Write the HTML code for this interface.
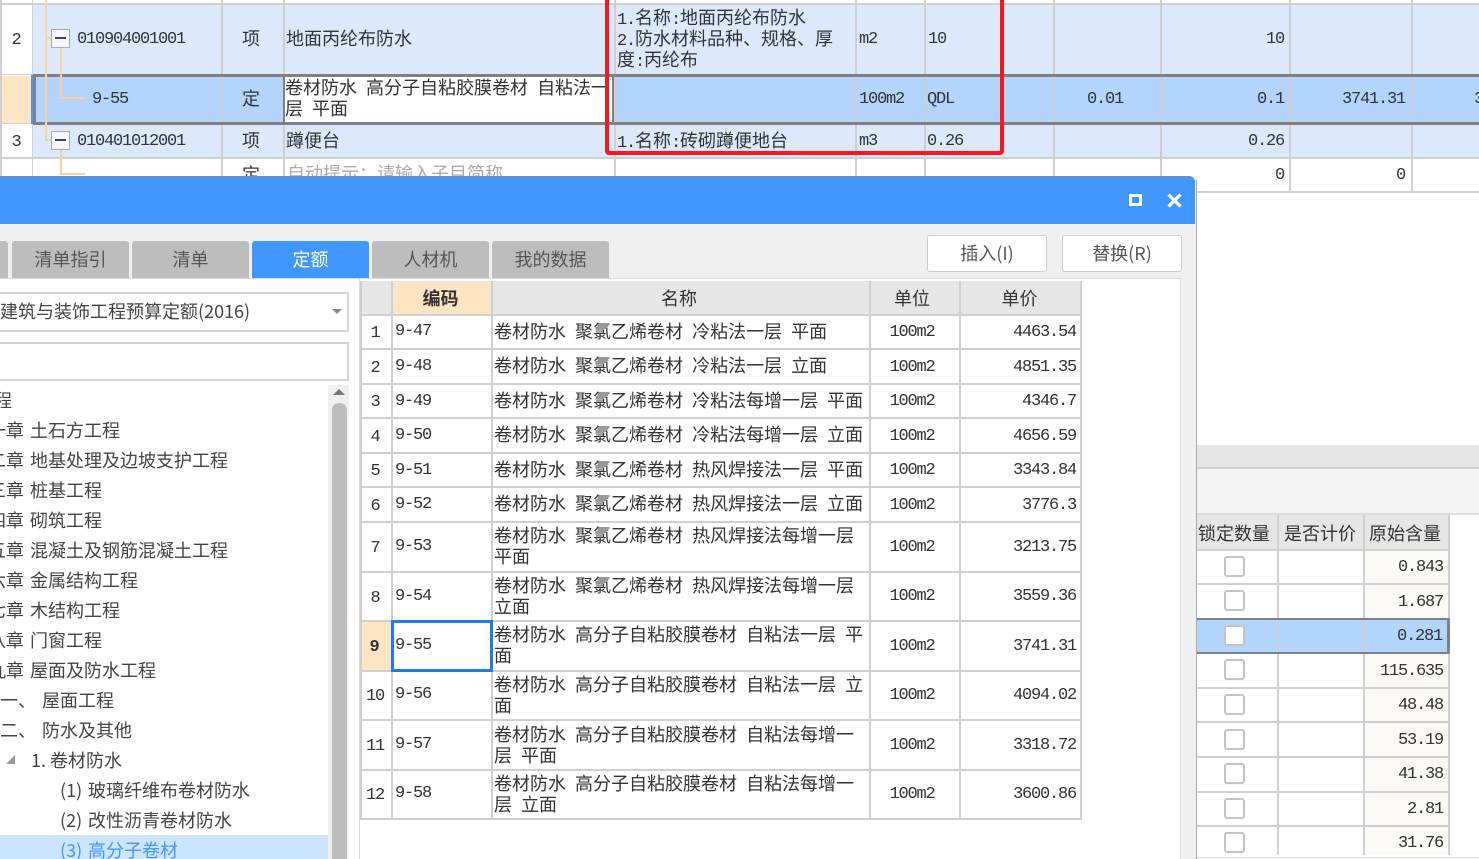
<!DOCTYPE html>
<html><head><meta charset="utf-8"><style>
html,body{margin:0;padding:0;background:#fff}
#r{position:relative;width:1479px;height:859px;overflow:hidden;background:#fff;font-family:"Noto Sans CJK SC","WenQuanYi Zen Hei",sans-serif;font-size:18px;color:#333;word-spacing:5px;filter:blur(.35px)}
#r div{position:absolute}
.t{line-height:22px;height:22px;white-space:pre}
.m{font-family:"Liberation Mono",monospace;font-size:17px;letter-spacing:-1.2px;word-spacing:0}
div.m{margin-top:2px;margin-right:1px}
.c{text-align:center}
.l{background:#cfcfcf}
.o{background:#fdd09a}
.tr{color:#444}
.tab{top:241px;height:37px;width:117px;background:#bdbdbd;border-radius:3px 3px 0 0;text-align:center;line-height:36px;color:#555}
.cb{left:1224px;width:17px;height:17px;border:2px solid #c4c4c4;border-radius:3px;background:#fff}
</style></head><body><div id="r">

<!-- top table backgrounds -->
<div style="left:33px;top:4px;width:1446px;height:70px;background:#dce9fd"></div>
<div style="left:33px;top:75px;width:1446px;height:48px;background:#b3d4fc"></div>
<div style="left:2px;top:76px;width:29px;height:47px;background:#fde4c3"></div>
<div style="left:33px;top:124px;width:1446px;height:34px;background:#dce9fd"></div>
<div style="left:284px;top:76px;width:330px;height:46px;background:#fff"></div>

<!-- horizontal lines -->
<div class="l" style="left:0;top:3px;width:1479px;height:2px"></div>
<div class="l" style="left:0;top:157px;width:1479px;height:2px"></div>
<div class="l" style="left:1196px;top:191px;width:283px;height:2px"></div>
<div class="l" style="left:0;top:74px;width:32px;height:1px"></div>
<div class="l" style="left:0;top:123px;width:32px;height:1px"></div>
<!-- vertical lines -->
<div class="l" style="left:0;top:0;width:2px;height:176px"></div>
<div class="l" style="left:32px;top:0;width:1px;height:176px"></div>
<div class="l" style="left:221px;top:0;width:2px;height:176px"></div>
<div class="l" style="left:283px;top:0;width:2px;height:176px"></div>
<div class="l" style="left:614px;top:0;width:2px;height:176px"></div>
<div class="l" style="left:855px;top:0;width:2px;height:176px"></div>
<div class="l" style="left:924px;top:0;width:2px;height:176px"></div>
<div class="l" style="left:1053px;top:0;width:2px;height:176px"></div>
<div class="l" style="left:1160px;top:0;width:2px;height:176px"></div>
<div class="l" style="left:1289px;top:0;width:2px;height:192px"></div>
<div class="l" style="left:1411px;top:0;width:2px;height:192px"></div>
<!-- selected row outline -->
<div style="left:33px;top:74px;width:1446px;height:3px;background:#808080"></div>
<div style="left:33px;top:122px;width:1446px;height:3px;background:#808080"></div>
<div style="left:31px;top:75px;width:2px;height:49px;background:#3f97ff"></div>
<div style="left:33px;top:75px;width:3px;height:49px;background:#808080"></div>
<div style="left:283px;top:75px;width:2px;height:49px;background:#808080"></div>
<div style="left:612px;top:75px;width:2px;height:49px;background:#808080"></div>

<!-- tree lines -->
<div class="o" style="left:45px;top:0;width:2px;height:141px"></div>
<div class="o" style="left:45px;top:37px;width:7px;height:2px"></div>
<div class="o" style="left:45px;top:139px;width:7px;height:2px"></div>
<div class="o" style="left:60px;top:47px;width:2px;height:52px"></div>
<div class="o" style="left:60px;top:97px;width:25px;height:2px"></div>
<div class="o" style="left:60px;top:149px;width:2px;height:26px"></div>
<div class="o" style="left:60px;top:173px;width:25px;height:2px"></div>
<div style="left:51px;top:29px;width:17px;height:17px;border:1px solid #aaa;background:#f4f7fe"></div>
<div style="left:55px;top:37px;width:11px;height:2px;background:#444"></div>
<div style="left:51px;top:131px;width:17px;height:17px;border:1px solid #aaa;background:#f4f7fe"></div>
<div style="left:55px;top:139px;width:11px;height:2px;background:#444"></div>

<!-- top table text -->
<div class="t m c" style="left:2px;width:28px;top:28px">2</div>
<div class="t m c" style="left:2px;width:28px;top:130px">3</div>
<div class="t m" style="left:77px;top:27px">010904001001</div>
<div class="t m" style="left:77px;top:129px">010401012001</div>
<div class="t m" style="left:92px;top:87px">9-55</div>
<div class="t" style="left:242px;top:27px">项</div>
<div class="t" style="left:242px;top:87px">定</div>
<div class="t" style="left:242px;top:129px">项</div>
<div class="t" style="left:286px;top:27px">地面丙纶布防水</div>
<div class="t" style="left:285px;top:76px">卷材防水 高分子自粘胶膜卷材 自粘法一</div>
<div class="t" style="left:285px;top:97px">层 平面</div>
<div class="t" style="left:286px;top:129px">蹲便台</div>
<div class="t" style="left:242px;top:163px">定</div>
<div class="t" style="left:287px;top:162px;color:#aaa">自动提示：请输入子目简称</div>
<div class="t" style="left:617px;top:6px"><span class="m">1.</span>名称<span class="m">:</span>地面丙纶布防水</div>
<div class="t" style="left:617px;top:27px"><span class="m">2.</span>防水材料品种、规格、厚</div>
<div class="t" style="left:617px;top:48px">度<span class="m">:</span>丙纶布</div>
<div class="t" style="left:617px;top:129px"><span class="m">1.</span>名称<span class="m">:</span>砖砌蹲便地台</div>
<div class="t m" style="left:859px;top:27px">m2</div>
<div class="t m" style="left:928px;top:27px">10</div>
<div class="t m" style="left:859px;top:87px">100m2</div>
<div class="t m" style="left:927px;top:87px">QDL</div>
<div class="t m" style="left:859px;top:129px">m3</div>
<div class="t m" style="left:927px;top:129px">0.26</div>
<div class="t m" style="right:194px;top:27px">10</div>
<div class="t m" style="right:355px;top:87px">0.01</div>
<div class="t m" style="right:194px;top:87px">0.1</div>
<div class="t m" style="right:73px;top:87px">3741.31</div>
<div class="t m" style="left:1474px;top:87px">3</div>
<div class="t m" style="right:194px;top:129px">0.26</div>
<div class="t m" style="right:194px;top:163px">0</div>
<div class="t m" style="right:73px;top:163px">0</div>

<!-- red box -->
<div style="left:605px;top:-6px;width:391px;height:153px;border:4px solid #f5191c;border-radius:4px"></div>

<!-- right panel -->
<div style="left:1197px;top:445px;width:282px;height:22px;background:#e6e6e6"></div>
<div style="left:1197px;top:467px;width:282px;height:2px;background:#cfcfcf"></div>
<div style="left:1197px;top:469px;width:282px;height:46px;background:#f4f4f4"></div>
<div style="left:1197px;top:513px;width:282px;height:2px;background:#dcdcdc"></div>
<div style="left:1197px;top:515px;width:251px;height:34px;background:#e6e6e6"></div>
<div style="left:1364px;top:549px;width:84px;height:306px;background:#fdfbf7"></div>
<div style="left:1197px;top:619px;width:251px;height:34px;background:#b3d4fc"></div>
<div class="l" style="left:1197px;top:549px;width:251px;height:2px"></div>
<div class="l" style="left:1197px;top:583px;width:251px;height:2px"></div>
<div class="l" style="left:1197px;top:687px;width:251px;height:2px"></div>
<div class="l" style="left:1197px;top:721px;width:251px;height:2px"></div>
<div class="l" style="left:1197px;top:756px;width:251px;height:2px"></div>
<div class="l" style="left:1197px;top:791px;width:251px;height:2px"></div>
<div class="l" style="left:1197px;top:825px;width:251px;height:2px"></div>
<div class="l" style="left:1277px;top:515px;width:2px;height:340px"></div>
<div class="l" style="left:1363px;top:515px;width:2px;height:340px"></div>
<div class="l" style="left:1448px;top:515px;width:2px;height:340px"></div>
<div style="left:1197px;top:618px;width:253px;height:2px;background:#808080"></div>
<div style="left:1197px;top:652px;width:253px;height:2px;background:#808080"></div>
<div style="left:1447px;top:618px;width:3px;height:36px;background:#808080"></div>
<div style="left:1197px;top:857px;width:282px;height:1px;background:#ddd"></div>
<div class="t" style="left:1198px;top:522px">锁定数量</div>
<div class="t" style="left:1284px;top:522px">是否计价</div>
<div class="t" style="left:1369px;top:522px">原始含量</div>
<div class="cb" style="top:556px"></div>
<div class="cb" style="top:590px"></div>
<div class="cb" style="top:625px"></div>
<div class="cb" style="top:659px"></div>
<div class="cb" style="top:694px"></div>
<div class="cb" style="top:729px"></div>
<div class="cb" style="top:763px"></div>
<div class="cb" style="top:798px"></div>
<div class="cb" style="top:832px"></div>
<div class="t m" style="right:35px;top:555px">0.843</div>
<div class="t m" style="right:35px;top:590px">1.687</div>
<div class="t m" style="right:36px;top:624px">0.281</div>
<div class="t m" style="right:35px;top:659px">115.635</div>
<div class="t m" style="right:35px;top:693px">48.48</div>
<div class="t m" style="right:35px;top:728px">53.19</div>
<div class="t m" style="right:35px;top:762px">41.38</div>
<div class="t m" style="right:35px;top:797px">2.81</div>
<div class="t m" style="right:35px;top:831px">31.76</div>

<!-- dialog -->
<div style="left:0;top:176px;width:1197px;height:683px;background:#f0f0f0"></div>
<div style="left:1196px;top:180px;width:1px;height:679px;background:#aaa"></div>
<div style="left:0;top:176px;width:1195px;height:47px;background:#3f97ff;border-top:1px solid #8a8a8a;border-radius:0 6px 0 0"></div>
<div style="left:1129px;top:194px;width:7px;height:6px;border:3px solid #fff"></div>
<svg style="position:absolute;left:1166px;top:193px" width="17" height="15" viewBox="0 0 17 15"><path d="M2.5 1.5L14.5 13.5M14.5 1.5L2.5 13.5" stroke="#fff" stroke-width="3.2" fill="none"/></svg>

<!-- tabs -->
<div class="tab" style="left:-109px"></div>
<div class="tab" style="left:12px">清单指引</div>
<div class="tab" style="left:132px">清单</div>
<div class="tab" style="left:252px;background:#3f97ff;color:#fff">定额</div>
<div class="tab" style="left:372px">人材机</div>
<div class="tab" style="left:492px">我的数据</div>

<!-- buttons -->
<div style="left:927px;top:235px;width:118px;height:35px;background:#fff;border:1px solid #ccc;border-radius:3px;text-align:center;line-height:35px;color:#555;word-spacing:0">插入(I)</div>
<div style="left:1062px;top:235px;width:118px;height:35px;background:#fff;border:1px solid #ccc;border-radius:3px;text-align:center;line-height:35px;color:#555;word-spacing:0">替换(R)</div>

<!-- content panel -->
<div style="left:0;top:279px;width:1181px;height:580px;background:#fff"></div>
<div style="left:0;top:278px;width:1181px;height:1px;background:#dcdcdc"></div>
<div style="left:1180px;top:279px;width:1px;height:580px;background:#e2e2e2"></div>
<div style="left:359px;top:279px;width:1px;height:580px;background:#ddd"></div>

<!-- left: select + input -->
<div style="left:-2px;top:292px;width:347px;height:36px;border:2px solid #d4d4d4;background:#fff"></div>
<div class="t" style="left:0;top:300px;word-spacing:0;color:#444">建筑与装饰工程预算定额(2016)</div>
<div style="left:332px;top:309px;width:0;height:0;border-left:5px solid transparent;border-right:5px solid transparent;border-top:5px solid #888"></div>
<div style="left:-2px;top:342px;width:347px;height:35px;border:2px solid #d4d4d4;background:#fff"></div>

<!-- scrollbar -->
<div style="left:328px;top:385px;width:21px;height:474px;background:#f0f0f0"></div>
<div style="left:332px;top:403px;width:15px;height:456px;background:#bdbdbd;border-radius:7px 7px 0 0"></div>
<div style="left:333px;top:389px;width:0;height:0;border-left:6px solid transparent;border-right:6px solid transparent;border-bottom:6px solid #777"></div>

<!-- tree -->
<div style="left:0;top:835px;width:328px;height:24px;background:#cce6ff"></div>
<div class="t tr" style="left:-6px;top:389px">程</div>
<div class="t tr" style="left:-30px;top:419px;word-spacing:2px">第一章 土石方工程</div>
<div class="t tr" style="left:-30px;top:449px;word-spacing:2px">第二章 地基处理及边坡支护工程</div>
<div class="t tr" style="left:-30px;top:479px;word-spacing:2px">第三章 桩基工程</div>
<div class="t tr" style="left:-30px;top:509px;word-spacing:2px">第四章 砌筑工程</div>
<div class="t tr" style="left:-30px;top:539px;word-spacing:2px">第五章 混凝土及钢筋混凝土工程</div>
<div class="t tr" style="left:-30px;top:569px;word-spacing:2px">第六章 金属结构工程</div>
<div class="t tr" style="left:-30px;top:599px;word-spacing:2px">第七章 木结构工程</div>
<div class="t tr" style="left:-30px;top:629px;word-spacing:2px">第八章 门窗工程</div>
<div class="t tr" style="left:-30px;top:659px;word-spacing:2px">第九章 屋面及防水工程</div>
<div class="t tr" style="left:0;top:689px">一、</div>
<div class="t tr" style="left:42px;top:689px">屋面工程</div>
<div class="t tr" style="left:0;top:719px">二、</div>
<div class="t tr" style="left:42px;top:719px">防水及其他</div>
<div style="left:6px;top:755px;width:0;height:0;border-left:9px solid transparent;border-bottom:9px solid #999"></div>
<div class="t tr" style="left:31px;top:749px;word-spacing:0">1.</div>
<div class="t tr" style="left:50px;top:749px">卷材防水</div>
<div class="t tr" style="left:60px;top:779px;word-spacing:0">(1)</div>
<div class="t tr" style="left:88px;top:779px">玻璃纤维布卷材防水</div>
<div class="t tr" style="left:60px;top:809px;word-spacing:0">(2)</div>
<div class="t tr" style="left:88px;top:809px">改性沥青卷材防水</div>
<div class="t" style="left:60px;top:839px;color:#3f97ff;word-spacing:0">(3)</div>
<div class="t" style="left:88px;top:839px;color:#3f97ff">高分子卷材</div>

<!-- main table -->
<div style="left:361px;top:281px;width:720px;height:33px;background:#e6e6e6"></div>
<div style="left:394px;top:282px;width:96px;height:32px;background:#fde4c3;border-bottom:1px solid #6aaaf5"></div>
<div style="left:362px;top:621px;width:29px;height:49px;background:#fde4c3"></div>

<div class="l" style="left:360px;top:314px;width:721px;height:2px"></div>
<div class="l" style="left:360px;top:348px;width:721px;height:2px"></div>
<div class="l" style="left:360px;top:383px;width:721px;height:2px"></div>
<div class="l" style="left:360px;top:417px;width:721px;height:2px"></div>
<div class="l" style="left:360px;top:452px;width:721px;height:2px"></div>
<div class="l" style="left:360px;top:486px;width:721px;height:2px"></div>
<div class="l" style="left:360px;top:521px;width:721px;height:2px"></div>
<div class="l" style="left:360px;top:571px;width:721px;height:2px"></div>
<div class="l" style="left:360px;top:620px;width:721px;height:2px"></div>
<div class="l" style="left:360px;top:670px;width:721px;height:2px"></div>
<div class="l" style="left:360px;top:719px;width:721px;height:2px"></div>
<div class="l" style="left:360px;top:769px;width:721px;height:2px"></div>
<div class="l" style="left:360px;top:818px;width:721px;height:2px"></div>

<div class="l" style="left:360px;top:281px;width:2px;height:539px"></div>
<div class="l" style="left:391px;top:281px;width:2px;height:539px"></div>
<div class="l" style="left:491px;top:281px;width:2px;height:539px"></div>
<div class="l" style="left:869px;top:281px;width:2px;height:539px"></div>
<div class="l" style="left:959px;top:281px;width:2px;height:539px"></div>
<div class="l" style="left:1080px;top:281px;width:2px;height:539px"></div>

<div style="left:391px;top:620px;width:96px;height:46px;border:3px solid #1f7cf0"></div>

<div class="t c" style="left:392px;width:97px;top:287px;font-weight:700">编码</div>
<div class="t c" style="left:491px;width:376px;top:287px">名称</div>
<div class="t c" style="left:868px;width:88px;top:287px">单位</div>
<div class="t c" style="left:960px;width:119px;top:287px">单价</div>

<div class="t m c" style="left:361px;width:28px;top:321px">1</div>
<div class="t m c" style="left:361px;width:28px;top:356px">2</div>
<div class="t m c" style="left:361px;width:28px;top:390px">3</div>
<div class="t m c" style="left:361px;width:28px;top:425px">4</div>
<div class="t m c" style="left:361px;width:28px;top:459px">5</div>
<div class="t m c" style="left:361px;width:28px;top:494px">6</div>
<div class="t m c" style="left:361px;width:28px;top:536px">7</div>
<div class="t m c" style="left:361px;width:28px;top:586px">8</div>
<div class="t m c" style="left:360px;width:28px;top:635px;font-weight:700">9</div>
<div class="t m c" style="left:361px;width:28px;top:684px">10</div>
<div class="t m c" style="left:361px;width:28px;top:734px">11</div>
<div class="t m c" style="left:361px;width:28px;top:783px">12</div>

<div class="t m" style="left:395px;top:319px">9-47</div>
<div class="t m" style="left:395px;top:354px">9-48</div>
<div class="t m" style="left:395px;top:389px">9-49</div>
<div class="t m" style="left:395px;top:423px">9-50</div>
<div class="t m" style="left:395px;top:458px">9-51</div>
<div class="t m" style="left:395px;top:492px">9-52</div>
<div class="t m" style="left:395px;top:534px">9-53</div>
<div class="t m" style="left:395px;top:584px">9-54</div>
<div class="t m" style="left:395px;top:633px">9-55</div>
<div class="t m" style="left:395px;top:682px">9-56</div>
<div class="t m" style="left:395px;top:732px">9-57</div>
<div class="t m" style="left:395px;top:781px">9-58</div>

<div class="t" style="left:494px;top:320px">卷材防水 聚氯乙烯卷材 冷粘法一层 平面</div>
<div class="t" style="left:494px;top:354px">卷材防水 聚氯乙烯卷材 冷粘法一层 立面</div>
<div class="t" style="left:494px;top:389px">卷材防水 聚氯乙烯卷材 冷粘法每增一层 平面</div>
<div class="t" style="left:494px;top:423px">卷材防水 聚氯乙烯卷材 冷粘法每增一层 立面</div>
<div class="t" style="left:494px;top:458px">卷材防水 聚氯乙烯卷材 热风焊接法一层 平面</div>
<div class="t" style="left:494px;top:492px">卷材防水 聚氯乙烯卷材 热风焊接法一层 立面</div>
<div class="t" style="left:494px;top:524px">卷材防水 聚氯乙烯卷材 热风焊接法每增一层</div>
<div class="t" style="left:494px;top:545px">平面</div>
<div class="t" style="left:494px;top:574px">卷材防水 聚氯乙烯卷材 热风焊接法每增一层</div>
<div class="t" style="left:494px;top:595px">立面</div>
<div class="t" style="left:494px;top:623px">卷材防水 高分子自粘胶膜卷材 自粘法一层 平</div>
<div class="t" style="left:494px;top:644px">面</div>
<div class="t" style="left:494px;top:673px">卷材防水 高分子自粘胶膜卷材 自粘法一层 立</div>
<div class="t" style="left:494px;top:694px">面</div>
<div class="t" style="left:494px;top:723px">卷材防水 高分子自粘胶膜卷材 自粘法每增一</div>
<div class="t" style="left:494px;top:744px">层 平面</div>
<div class="t" style="left:494px;top:772px">卷材防水 高分子自粘胶膜卷材 自粘法每增一</div>
<div class="t" style="left:494px;top:793px">层 立面</div>

<div class="t m c" style="left:870px;width:84px;top:320px">100m2</div>
<div class="t m c" style="left:870px;width:84px;top:355px">100m2</div>
<div class="t m c" style="left:870px;width:84px;top:389px">100m2</div>
<div class="t m c" style="left:870px;width:84px;top:424px">100m2</div>
<div class="t m c" style="left:870px;width:84px;top:458px">100m2</div>
<div class="t m c" style="left:870px;width:84px;top:493px">100m2</div>
<div class="t m c" style="left:870px;width:84px;top:535px">100m2</div>
<div class="t m c" style="left:870px;width:84px;top:584px">100m2</div>
<div class="t m c" style="left:870px;width:84px;top:634px">100m2</div>
<div class="t m c" style="left:870px;width:84px;top:683px">100m2</div>
<div class="t m c" style="left:870px;width:84px;top:733px">100m2</div>
<div class="t m c" style="left:870px;width:84px;top:782px">100m2</div>

<div class="t m" style="right:402px;top:320px">4463.54</div>
<div class="t m" style="right:402px;top:355px">4851.35</div>
<div class="t m" style="right:402px;top:389px">4346.7</div>
<div class="t m" style="right:402px;top:424px">4656.59</div>
<div class="t m" style="right:402px;top:458px">3343.84</div>
<div class="t m" style="right:402px;top:493px">3776.3</div>
<div class="t m" style="right:402px;top:535px">3213.75</div>
<div class="t m" style="right:402px;top:584px">3559.36</div>
<div class="t m" style="right:402px;top:634px">3741.31</div>
<div class="t m" style="right:402px;top:683px">4094.02</div>
<div class="t m" style="right:402px;top:733px">3318.72</div>
<div class="t m" style="right:402px;top:782px">3600.86</div>

</div></body></html>
